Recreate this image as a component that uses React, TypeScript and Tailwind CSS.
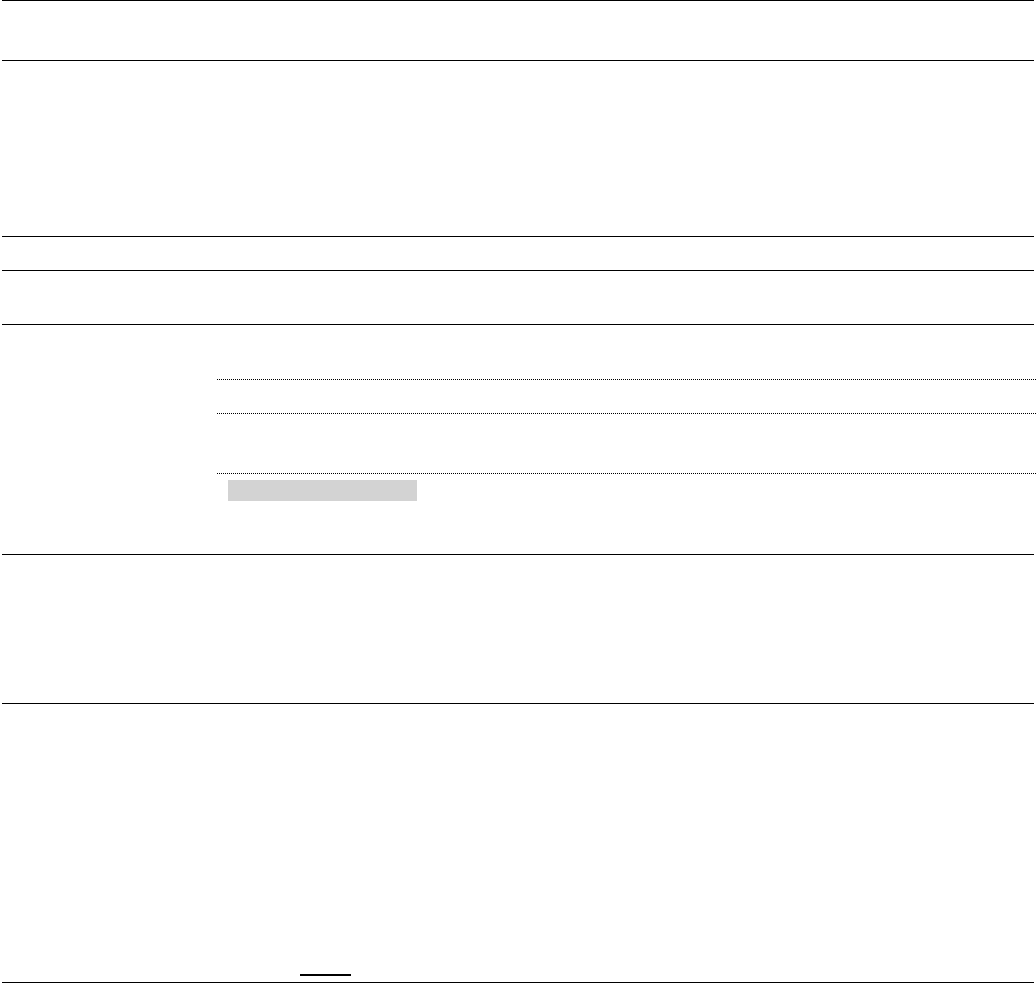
export default function App() {
  return (
    <div className="w-[1036px] h-[984px] bg-white pl-[2px] pr-[2px] font-['Liberation_Sans',sans-serif]">
      <div className="h-[60px] border-t border-black" />
      <div className="h-[176px] border-t border-black" />
      <div className="h-[34px] border-t border-black" />
      <div className="h-[54px] border-t border-black" />
      <div className="flex h-[230px] border-t border-black">
        <div className="w-[215px] shrink-0" />
        <div className="flex-1 -mr-[2px]">
          <div className="h-[55px] border-b border-dotted border-black" />
          <div className="h-[34px] border-b border-dotted border-black" />
          <div className="h-[60px] border-b border-dotted border-black" />
          <div className="ml-[11px] mt-[6px] h-[21px] w-[189px] bg-[#d3d3d3]" />
        </div>
      </div>
      <div className="h-[149px] border-t border-black" />
      <div className="flex h-[280px] flex-col justify-end border-y border-black">
        <div className="mb-[6px] ml-[298px] h-[2px] w-[51px] bg-black" />
      </div>
    </div>
  );
}
